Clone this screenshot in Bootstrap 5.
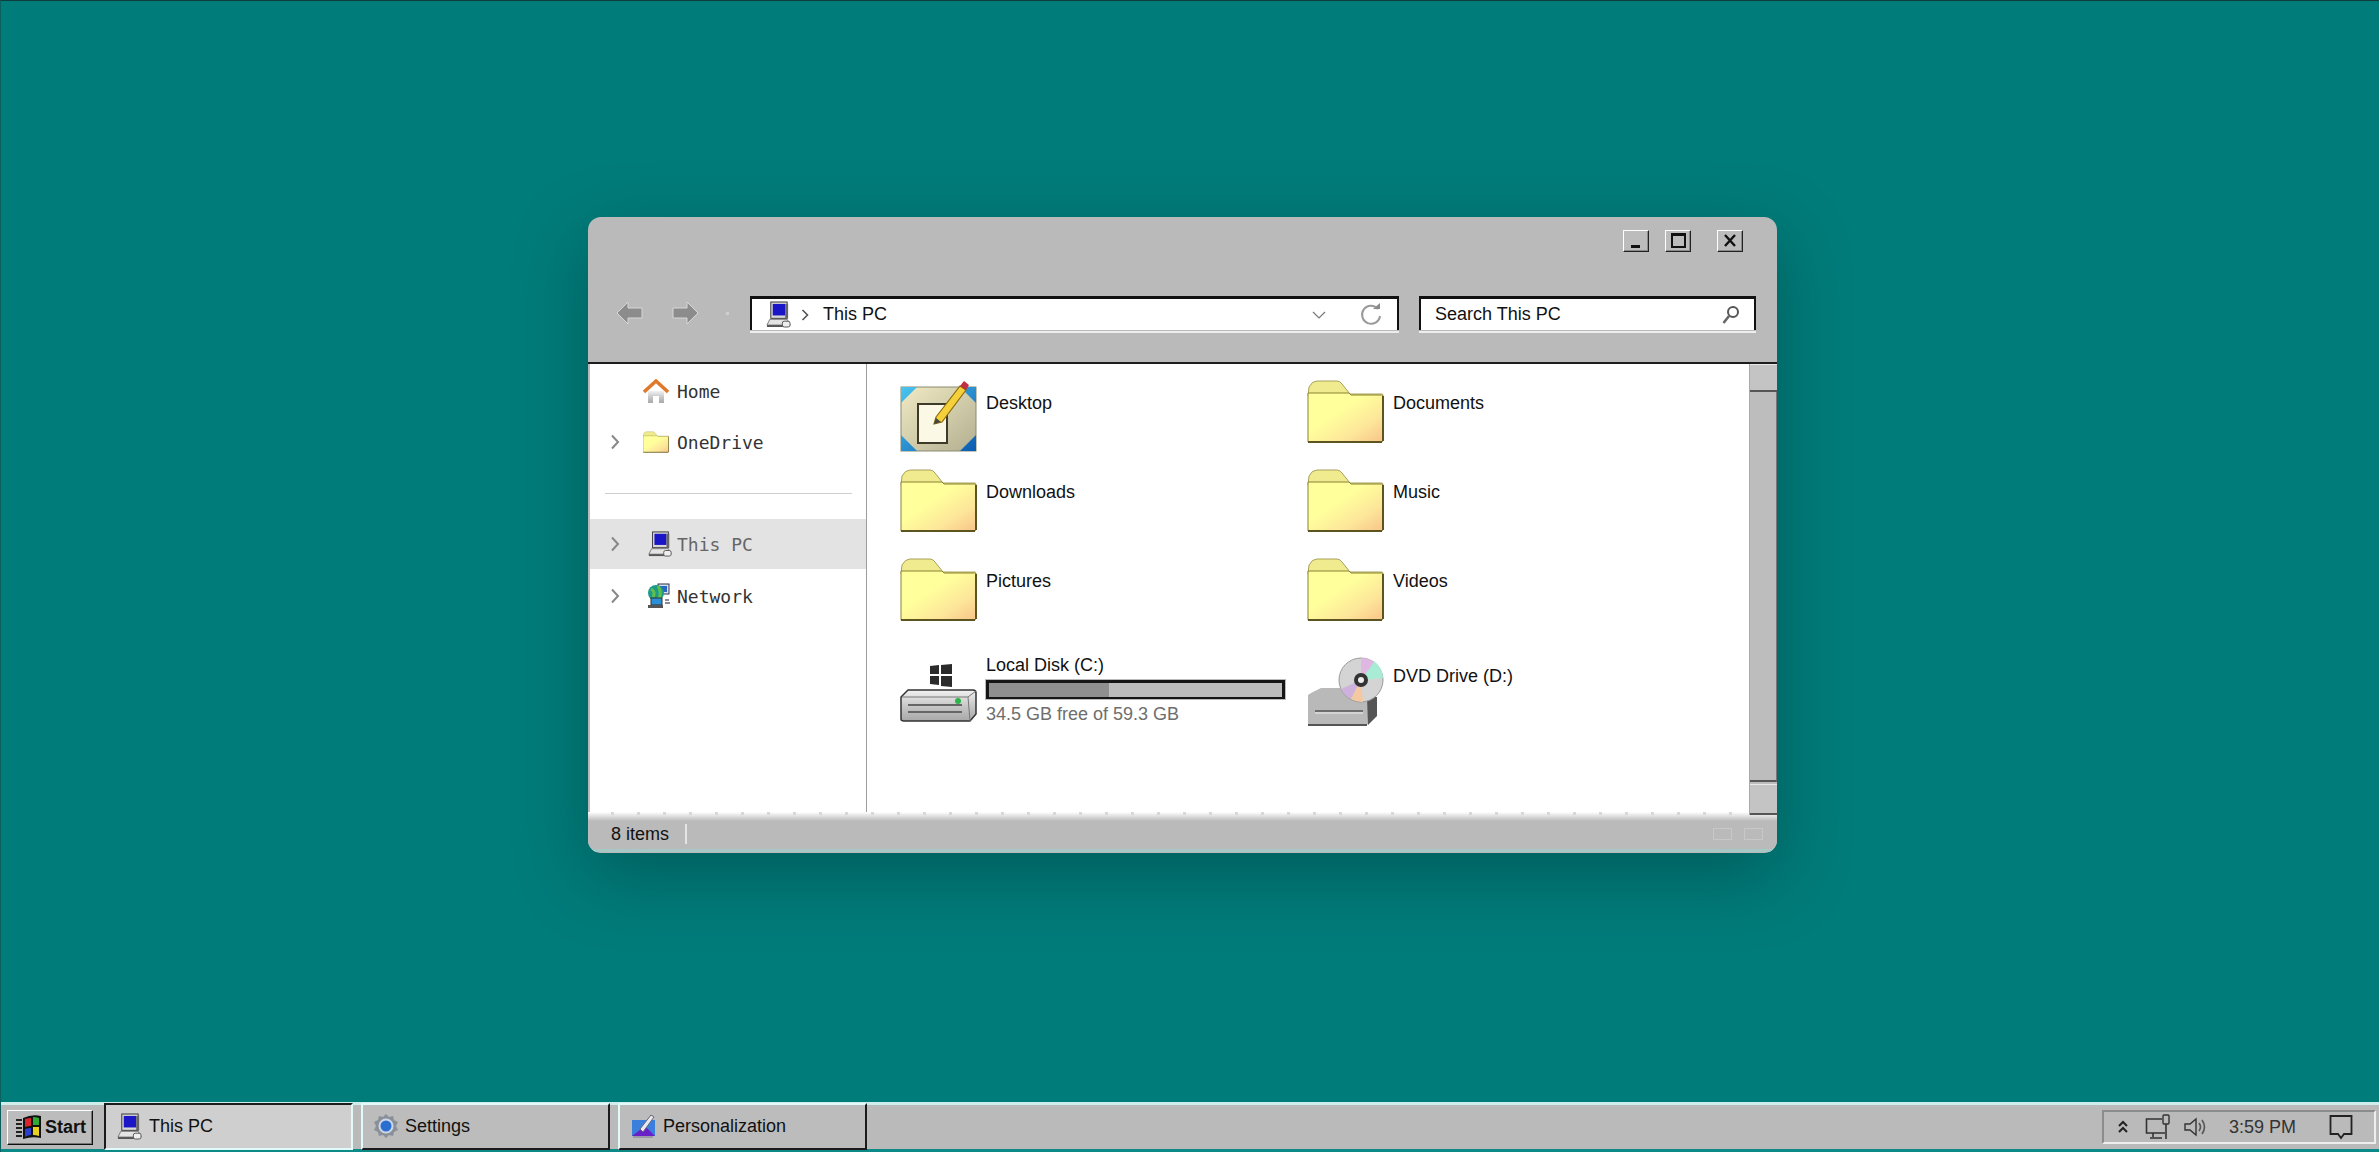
<!DOCTYPE html>
<html lang="en"><head><meta charset="utf-8"><title>This PC</title>
<link href="https://cdn.jsdelivr.net/npm/bootstrap@5.3.0/dist/css/bootstrap.min.css" rel="stylesheet">
<style>
html,body{height:100%;margin:0;overflow:hidden}
body{background:#007c7a;font-family:"Liberation Sans",Arial,sans-serif;font-size:18px;color:#111;border-top:1px solid #123c3c;border-left:1px solid #0a5f5f}
.desk{position:relative;min-height:0}
.win{position:absolute;left:587px;top:216px;width:1189px;height:636px;background:#bababa;border-radius:13px;box-shadow:0 22px 70px rgba(0,40,40,.36);overflow:hidden}
.capbar{height:81px;padding:13px 34px 0 0;gap:16px}
.capb{width:26px;height:22px;background:#bcbcbc;border:1px solid;border-color:#fff #222 #222 #fff;box-shadow:inset -1px -1px 0 #8a8a8a;padding:0}
.capb svg{display:block;margin:auto}
.capb.gapl{margin-left:10px}
.tools{height:64px;padding-bottom:34px;padding-left:28px}
.tools .arrow{width:27px;height:24px}
.fwd{margin-left:29px}
.sep-dot{width:3px;height:3px;background:#cfcfcf;margin:0 21px 0 27px}
.addr{width:649px;height:34px;background:#fff;border:solid #111;border-width:3px 2px 0 2px;box-shadow:0 1px 0 #bababa,0 3px 0 #eee;padding:0 15px 0 14px}
.addr .crumb{margin:0 14px 0 10px}
.addr .drop{margin-right:34px}
.srch{width:337px;height:34px;margin-left:20px;background:#fff;border:solid #111;border-width:3px 2px 0 2px;box-shadow:0 1px 0 #bababa,0 3px 0 #eee;padding:0 14px}
.rule{height:2px;background:#1d1d1d;flex:none}
.main{height:448px;padding-left:2px;position:relative;z-index:1}
.side{width:277px;background:#fff;border-right:1px solid #9c9c9c;padding-top:2px;font-family:"DejaVu Sans Mono","Liberation Mono",monospace;font-size:18px;color:#333;gap:1px}
.srow{height:50px;flex:none;padding-left:20px}
.srow .chev{width:20px}
.srow .sic{width:34px;margin-left:13px}
.srow .sic.ind{padding-left:4px}
.srow.cur{background:#e3e3e3;color:#666}
.srow.net{margin-top:1px}
.sdiv{height:1px;background:#cfcfcf;margin:25px 14px 24px 15px;flex:none}
.files{background:#fff;padding:16px 0 0 33px;display:grid;grid-template-columns:407px 1fr;grid-template-rows:89px 89px 92px;align-content:start}
.fitem{gap:9px}
.fitem .nm{padding-top:11px;line-height:24px}
.fic{width:77px;flex:none}
.ftxt{width:299px;margin-top:3px;line-height:24px}
.drv{margin-top:13px}
.dvd{margin-top:7px}
.fitem .nm.dvdn{padding-top:14px}
.dbar{height:19px;margin:3px 0 3px;border:solid #161616;border-width:3px 3px 2px 3px;background:#bdbdbd;box-shadow:0 0 0 1px #bbb}
.dfill{height:100%;background:#8f8f8f}
.grey{color:#6e6e6e}
.sbar{width:28px;background:#bcbcbc;border-left:1px solid #a9a9a9;margin-bottom:-3px;position:relative}
.sbtn{height:28px;flex:none;background:#c4c4c4;border-bottom:2px solid #555;border-top:1px solid #e8e8e8}
.sbtn.low{height:31px;margin-top:2px}
.strk{background:#bdbdbd;border-right:1px solid #777;border-bottom:2px solid #555}
.stat{height:40px;background:linear-gradient(180deg,#fff 0,#bababa 9px);position:relative;padding:7px 14px 0 23px;border-bottom:3px solid #a8c8c6;font-size:18px}
.stat::before{content:"";position:absolute;left:0;right:0;top:0;height:3px;background:repeating-linear-gradient(90deg,transparent 0 23px,#d8d8d8 23px 26px)}
.vsep{width:2px;height:20px;background:#e4e4e4;margin-left:16px}
.vicos{gap:12px;margin-left:auto}
.vic{width:19px;height:12px;border:1px solid #c8c8c8}
.tbar{height:50px;flex:none;background:#bababa;border-top:3px solid #cdeeea;border-bottom:3px solid #0c8a88;padding-left:6px}
.startb{width:86px;height:35px;background:#bcbcbc;border:1px solid;border-color:#fff #111 #111 #fff;box-shadow:inset -1px -1px 0 #777;font-weight:700;gap:3px;color:#111;font-size:18px;padding:0 0 0 8px;border-radius:0;flex:none}
.tbtn{height:47px;width:249px;flex:none;margin-top:-3px;margin-bottom:-1px;margin-right:8px;background:#bcbcbc;border:2px solid;border-color:#e2fbf8 #1b1b1b #1b1b1b #e2fbf8;padding:0 0 0 11px;gap:7px;border-radius:0;font-size:18px;color:#111}
.tbtn.on{background:#cfcfcf;border-color:#1b1b1b #e2fbf8 #e2fbf8 #1b1b1b;margin-left:11px}
.tray{width:274px;height:34px;flex:none;border:2px solid;border-color:#8c8c8c #eee #eee #8c8c8c;margin:0 3px 0 auto;padding:0 0 0 14px;color:#333}
.tray .netc{margin-left:17px}
.tray .spk{margin-left:13px}
.tray .tm{margin:0 33px 0 21px;font-size:18px}
</style></head>
<body class="d-flex flex-column">
<svg width="0" height="0" class="position-absolute">
<defs>
<linearGradient id="fg" x1="0" y1="0" x2="1" y2="1"><stop offset=".4" stop-color="#ffff9c"/><stop offset=".72" stop-color="#fde69a"/><stop offset="1" stop-color="#f8c488"/></linearGradient>
<linearGradient id="hd" x1="0" y1="0" x2="0" y2="1"><stop offset="0" stop-color="#f2f2f2"/><stop offset=".5" stop-color="#c8c8c8"/><stop offset="1" stop-color="#a8a8a8"/></linearGradient>
<linearGradient id="bl" x1="0" y1="0" x2="1" y2="1"><stop offset="0" stop-color="#49c5ef"/><stop offset="1" stop-color="#0b5bb0"/></linearGradient>
<linearGradient id="bg" x1="0" y1="0" x2="1" y2="1"><stop offset="0" stop-color="#f0ebc4"/><stop offset="1" stop-color="#b3ae90"/></linearGradient>
<symbol id="folder" viewBox="0 0 77 63">
<path d="M1 16 L2 7 Q5 1 10 1 H30 Q33 1 35 4 L43 14 H75 Q76 14 76 16 Z" fill="#efeb8e" stroke="#a9a25c"/>
<path d="M1 13 H42 L44 15 H74.500 Q76 15 76 17 V60 Q76 62 74 62 H1 Z" fill="url(#fg)" stroke="#8a8232" stroke-width="1"/>
<path d="M1 62 H75 M76 16 V61" stroke="#5d5520" stroke-width="2" fill="none"/>
</symbol>
<symbol id="pc" viewBox="0 0 26 28">
<rect x="5" y="1" width="17" height="17" fill="#d8d8d8" stroke="#333"/><rect x="7" y="3" width="13" height="12" fill="#1a16c8"/><rect x="20" y="3" width="3" height="15" fill="#666"/>
<path d="M4 19 H22 L25 25 H1 Z" fill="#e4e4e4" stroke="#777"/><path d="M1 26 H19" stroke="#555" stroke-width="2"/><rect x="17" y="21" width="8" height="6" rx="2" fill="#eee" stroke="#555"/>
</symbol>
</defs>
</svg>

<div class="desk flex-grow-1">
<div class="win d-flex flex-column">
  <div class="capbar d-flex justify-content-end align-items-start flex-none">
    <button class="capb" aria-label="Minimize"><svg width="24" height="20"><rect x="7" y="14" width="9" height="3" fill="#111"/></svg></button>
    <button class="capb" aria-label="Maximize"><svg width="24" height="20"><rect x="6" y="3" width="13" height="13" fill="none" stroke="#111" stroke-width="2"/><path d="M6 4H19" stroke="#111" stroke-width="2"/></svg></button>
    <button class="capb gapl" aria-label="Close"><svg width="24" height="20"><path d="M7 4 L17 15 M17 4 L7 15" stroke="#111" stroke-width="2.400"/></svg></button>
  </div>
  <div class="tools d-flex align-items-center flex-none">
    <svg class="arrow" viewBox="0 0 27 24"><path d="M1 12 L12 1 V7 H26 V17 H12 V23 Z" fill="#8c8c8c" stroke="#d8d8d8"/></svg>
    <svg class="arrow fwd" viewBox="0 0 27 24"><path d="M26 12 L15 1 V7 H1 V17 H15 V23 Z" fill="#8c8c8c" stroke="#d8d8d8"/></svg>
    <span class="sep-dot"></span>
    <div class="addr d-flex align-items-center">
      <svg width="25" height="27"><use href="#pc"/></svg>
      <svg class="crumb" width="8" height="12" viewBox="0 0 8 12"><path d="M1.500 1 L6.500 6 L1.500 11" fill="none" stroke="#555" stroke-width="1.600"/></svg>
      <span>This PC</span>
      <svg class="drop ms-auto" width="14" height="8" viewBox="0 0 14 8"><path d="M1 1 L7 7 L13 1" fill="none" stroke="#777" stroke-width="1.200"/></svg>
      <svg width="22" height="24" viewBox="0 0 22 24"><path d="M18 6 A9 9 0 1 0 20 13" fill="none" stroke="#9a9a9a" stroke-width="2"/><path d="M13 6 H20 V0 Z" fill="#8a8a8a"/></svg>
    </div>
    <div class="srch d-flex align-items-center justify-content-between">
      <span>Search This PC</span>
      <svg width="18" height="20" viewBox="0 0 18 20"><circle cx="11" cy="7" r="5" fill="none" stroke="#555" stroke-width="2"/><path d="M7 11 L1.500 18" stroke="#666" stroke-width="2.600"/></svg>
    </div>
  </div>
  <div class="rule"></div>
  <div class="main d-flex flex-none">
    <div class="side d-flex flex-column flex-none">
      <div class="srow d-flex align-items-center"><span class="chev"></span><span class="sic d-flex">
        <svg width="26" height="25" viewBox="0 0 26 25"><path d="M5 12 H21 V24 H16 V17 H10 V24 H5 Z" fill="url(#hd)"/><path d="M1 13 L13 2 L25 13" fill="none" stroke="#e07a2a" stroke-width="3.500"/></svg></span><span>Home</span></div>
      <div class="srow d-flex align-items-center"><span class="chev d-flex"><svg width="10" height="16" viewBox="0 0 10 16"><path d="M2 1.500 L8 8 L2 14.500" fill="none" stroke="#888" stroke-width="2"/></svg></span><span class="sic d-flex"><svg width="26" height="22"><use href="#folder"/></svg></span><span>OneDrive</span></div>
      <div class="sdiv"></div>
      <div class="srow cur d-flex align-items-center"><span class="chev d-flex"><svg width="10" height="16" viewBox="0 0 10 16"><path d="M2 1.500 L8 8 L2 14.500" fill="none" stroke="#888" stroke-width="2"/></svg></span><span class="sic ind d-flex"><svg width="26" height="26"><use href="#pc"/></svg></span><span>This PC</span></div>
      <div class="srow net d-flex align-items-center"><span class="chev d-flex"><svg width="10" height="16" viewBox="0 0 10 16"><path d="M2 1.500 L8 8 L2 14.500" fill="none" stroke="#888" stroke-width="2"/></svg></span><span class="sic ind d-flex">
        <svg width="24" height="26" viewBox="0 0 24 26"><rect x="11" y="1" width="11" height="10" fill="#cfe3f5" stroke="#334"/><rect x="13" y="3" width="7" height="6" fill="#2a66c8"/><circle cx="9" cy="10" r="8" fill="#1e9a8a"/><path d="M4 6 Q9 9 6 14 M11 3 Q15 9 12 16" stroke="#62c04a" stroke-width="3" fill="none"/><rect x="4" y="15" width="11" height="7" fill="#2b8fd8" stroke="#333"/><rect x="1" y="22" width="15" height="3" fill="#555"/><path d="M18 17 h4 M18 20 h5" stroke="#667" stroke-width="1.500"/></svg></span><span>Network</span></div>
    </div>
    <div class="files flex-grow-1">
      <div class="fitem d-flex">
        <svg class="fic" width="77" height="72" viewBox="0 0 77 72">
          <rect x="1" y="7" width="75" height="64" fill="url(#bg)" stroke="#8a8a70"/>
          <path d="M1 7 H17 L1 23 Z M60 7 H76 V23 Z M1 55 L17 71 H1 Z M76 55 V71 H60 Z" fill="url(#bl)"/>
          <rect x="18" y="24" width="29" height="39" fill="#fbf9e6" stroke="#3d3a2a" stroke-width="2"/>
          <path d="M36 37 L60 6 L66 10 L42 42 L34 44 Z" fill="#f4d13a" stroke="#8a6a10" stroke-width="1.200"/><path d="M60 6 L64 1 L69 5 L66 10 Z" fill="#c03040"/><path d="M34 44 L36 38 L41 42 Z" fill="#444"/>
        </svg><span class="nm">Desktop</span></div>
      <div class="fitem d-flex"><svg class="fic" width="77" height="63"><use href="#folder"/></svg><span class="nm">Documents</span></div>
      <div class="fitem d-flex"><svg class="fic" width="77" height="63"><use href="#folder"/></svg><span class="nm">Downloads</span></div>
      <div class="fitem d-flex"><svg class="fic" width="77" height="63"><use href="#folder"/></svg><span class="nm">Music</span></div>
      <div class="fitem d-flex"><svg class="fic" width="77" height="63"><use href="#folder"/></svg><span class="nm">Pictures</span></div>
      <div class="fitem d-flex"><svg class="fic" width="77" height="63"><use href="#folder"/></svg><span class="nm">Videos</span></div>
      <div class="fitem d-flex">
        <svg class="fic drv" width="77" height="60" viewBox="0 0 77 60">
          <path d="M30 3 l9 -1 v9 h-9 Z M41 2 l11 -1 v10 h-11 Z M30 13 h9 v9 l-9 -1 Z M41 13 h11 v11 l-11 -1 Z" fill="#2b2b2b"/>
          <path d="M8 27 L1 34 V56 Q1 58 4 58 H70 L76 51 V30 Q76 27 73 27 Z" fill="url(#hd)" stroke="#333" stroke-width="1.500"/>
          <path d="M2 34 H68 L70 58 M68 34 L76 28" fill="none" stroke="#777"/>
          <path d="M8 42 H62 M8 49 H62" stroke="#666" stroke-width="2"/><circle cx="58" cy="38" r="3" fill="#2fb44a"/>
        </svg>
        <div class="ftxt"><div>Local Disk (C:)</div><div class="dbar"><div class="dfill" style="width:41%"></div></div><div class="grey">34.5 GB free of 59.3 GB</div></div>
      </div>
      <div class="fitem d-flex">
        <svg class="fic dvd" width="77" height="69" viewBox="0 0 77 69">
          <path d="M4 36 L14 31 H68 V60 L60 68 H1 V38 Z" fill="#b9b9b9"/><path d="M60 40 H70 V59 L61 68 Z" fill="#555"/><path d="M1 68 H60" stroke="#555" stroke-width="2"/><path d="M8 54 H56" stroke="#555" stroke-width="1.500"/><path d="M8 56 H56" stroke="#eee"/>
          <circle cx="54" cy="23" r="22" fill="#d4d4d4" stroke="#9a9a9a"/>
          <path d="M54 23 L67 4 A22 22 0 0 1 76 21 Z" fill="#a9ecd6"/><path d="M54 23 L54 1 A22 22 0 0 1 67 5 Z" fill="#e0b6e2"/><path d="M54 23 L34 32 A22 22 0 0 0 44 42 Z" fill="#cfb2dc"/><path d="M54 23 L44 42 A22 22 0 0 0 56 45 Z" fill="#f4c8a0"/>
          <circle cx="54" cy="23" r="7" fill="#333"/><circle cx="54" cy="23" r="3" fill="#eee"/>
        </svg><span class="nm dvdn">DVD Drive (D:)</span></div>
    </div>
    <div class="sbar d-flex flex-column flex-none">
      <div class="sbtn"></div><div class="strk flex-grow-1"></div><div class="sbtn low"></div>
    </div>
  </div>
  <div class="stat d-flex align-items-center flex-none">
    <span>8 items</span><span class="vsep"></span>
    <span class="vicos d-flex"><span class="vic"></span><span class="vic"></span></span>
  </div>
</div>
</div>

<div class="tbar d-flex align-items-center">
  <button class="btn startb d-flex align-items-center">
    <svg width="26" height="26" viewBox="0 0 26 26"><path d="M7 4 Q16 0 25 2 V24 Q16 22 7 25 Z" fill="#111"/><path d="M9 5 Q12 4 15 4 V12 Q12 12 9 13 Z" fill="#d8242a"/><path d="M17 3 Q20 3 23 4 V11 Q20 11 17 11 Z" fill="#2fa838"/><path d="M9 15 Q12 14 15 14 V21 Q12 21 9 23 Z" fill="#2a3ed0"/><path d="M17 13 Q20 13 23 13 V22 Q20 21 17 21 Z" fill="#e8d020"/><path d="M0 6 H6 M0 10 H6 M0 14 H6 M0 18 H6 M0 22 H6" stroke="#222" stroke-width="2"/></svg>
    <span>Start</span></button>
  <button class="btn tbtn on d-flex align-items-center"><svg width="25" height="29"><use href="#pc"/></svg><span>This PC</span></button>
  <button class="btn tbtn d-flex align-items-center"><svg width="24" height="26" viewBox="0 0 24 26"><path d="M12 1 l3 3 4 -1 1 4 4 2 -2 4 2 4 -4 2 -1 4 -4 -1 -3 3 -3 -3 -4 1 -1 -4 -4 -2 2 -4 -2 -4 4 -2 1 -4 4 1 Z" fill="#8a9099"/><circle cx="12" cy="13" r="6.500" fill="#2a6fd0" stroke="#d0d8e8" stroke-width="2"/></svg><span>Settings</span></button>
  <button class="btn tbtn d-flex align-items-center"><svg width="25" height="24" viewBox="0 0 25 24"><rect x="1" y="6" width="23" height="16" fill="#3a7fdc"/><path d="M1 22 L14 12 L24 22 Z" fill="#6a20c8"/><path d="M9 15 L20 1 L23 3 L12 18 Z" fill="#e8e8f0" stroke="#667"/><path d="M2 23 H22" stroke="#99a" stroke-width="2"/></svg><span>Personalization</span></button>
  <div class="tray d-flex align-items-center">
    <svg width="10" height="14" viewBox="0 0 10 14"><path d="M1 6 L5 2 L9 6 M1 12 L5 8 L9 12" fill="none" stroke="#222" stroke-width="2"/></svg>
    <svg class="netc" width="26" height="26" viewBox="0 0 26 26"><path d="M17 5 H1.500 V19 H17 M17 19 H20" fill="none" stroke="#333" stroke-width="1.600"/><path d="M8 19 V23 M5 24 H17" stroke="#333" stroke-width="1.600"/><rect x="18" y="1" width="6" height="9" rx="1" fill="none" stroke="#333" stroke-width="1.400"/><path d="M21 10 V25" stroke="#333" stroke-width="1.600"/></svg>
    <svg class="spk" width="24" height="20" viewBox="0 0 24 20"><path d="M1 7 H6 L12 2 V18 L6 13 H1 Z" fill="none" stroke="#333" stroke-width="1.400"/><path d="M15 6 Q18 10 15 14 M18 3 Q23 10 18 17" fill="none" stroke="#555" stroke-width="1.600"/></svg>
    <span class="tm">3:59 PM</span>
    <svg width="24" height="26" viewBox="0 0 24 26"><path d="M1.500 2 H22.500 V20 H15 L12 24 L9 20 H1.500 Z" fill="none" stroke="#222" stroke-width="1.800"/></svg>
  </div>
</div>
</body></html>
